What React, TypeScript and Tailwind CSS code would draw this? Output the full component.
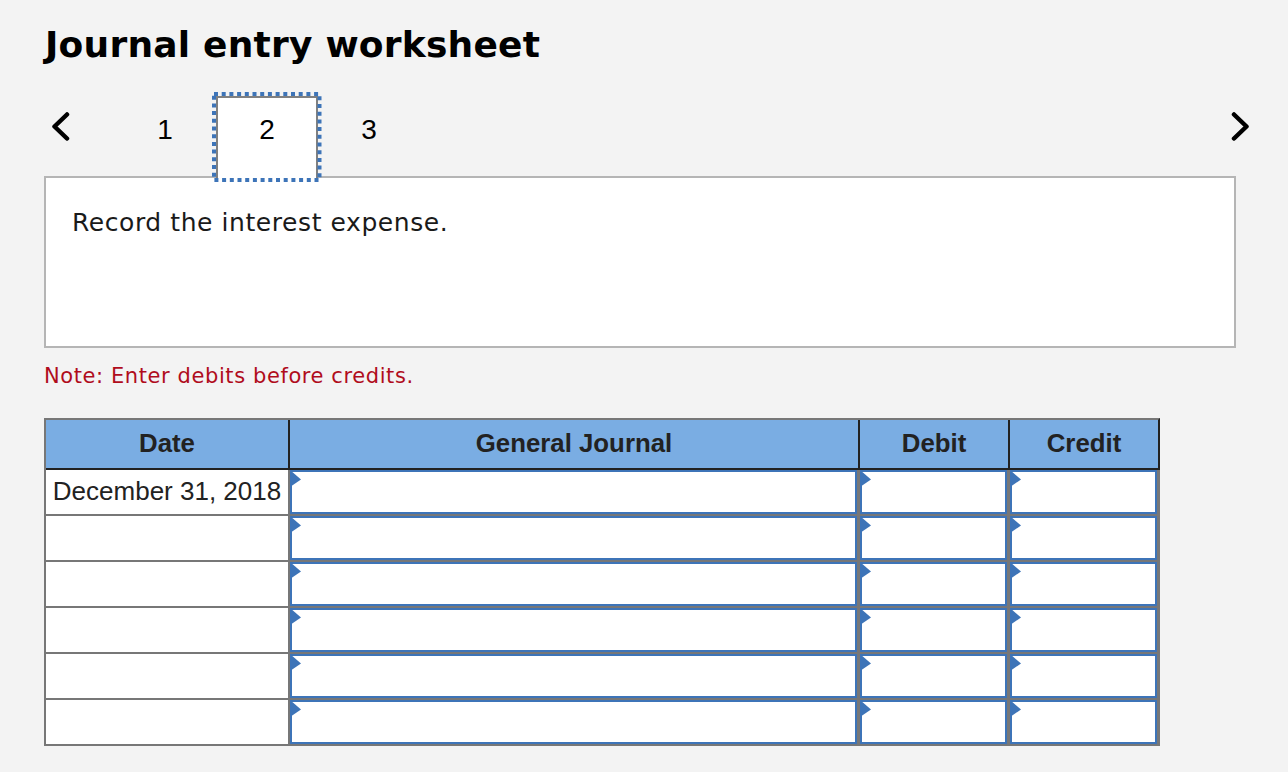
const rows = [0, 1, 2, 3, 4, 5];

function Chevron({ dir }: { dir: "left" | "right" }) {
  return (
    <svg width="18" height="29" viewBox="0 0 18 29" className="text-black">
      <path
        d={dir === "left" ? "M15 2.5 L2.5 14.5 L15 26.5" : "M3 2.5 L15.5 14.5 L3 26.5"}
        fill="none"
        stroke="currentColor"
        strokeWidth="4.5"
        strokeLinecap="round"
        strokeLinejoin="round"
      />
    </svg>
  );
}

function EntryCell() {
  return (
    <div className="relative h-[44px] mr-px border-2 border-[#3d74b8] bg-white">
      <svg width="11" height="17" viewBox="0 0 11 17" className="absolute -left-[2px] -top-[2px]">
        <path d="M0 0 L11 9.5 L0 17 Z" fill="#3d74b8" />
      </svg>
    </div>
  );
}

export default function App() {
  return (
    <div className="min-h-[772px] bg-[#f3f3f3] pt-[22px] px-[44px] font-['Liberation_Sans',sans-serif]">
      <h1 className="h-[46px] pl-px text-[36px] leading-[46px] tracking-[0.22px] font-bold text-black font-['DejaVu_Sans',sans-serif]">
        Journal entry worksheet
      </h1>

      {/* tabs */}
      <div className="mt-[28px] h-[81px] w-[1205px] flex items-start text-[28px] text-black">
        <div className="w-[33px] pt-[16px] pl-[8px]">
          <Chevron dir="left" />
        </div>
        <div className="ml-[37px] w-[102px] h-[81px] flex justify-center pt-[18px] leading-[32px]">1</div>
        <div className="relative z-10 w-[102px] h-[83px] border-2 border-b-0 border-[#808080] bg-white flex justify-center pt-[16px] leading-[32px]">
          2
          <svg width="110" height="90" className="absolute -left-[6px] -top-[6px]">
            <rect x="2" y="2" width="105.5" height="86" fill="none" stroke="#3d74b8" strokeWidth="4" strokeDasharray="4 3.7" />
          </svg>
        </div>
        <div className="w-[102px] h-[81px] flex justify-center pt-[18px] leading-[32px]">3</div>
        <div className="ml-auto pt-[16px]">
          <Chevron dir="right" />
        </div>
      </div>

      {/* prompt */}
      <div className="mt-[-1px] w-[1192px] h-[172px] border-2 border-[#b5b5b5] bg-white pl-[26px] pt-[27px] text-[25px] leading-[36px] tracking-[0.57px] text-[#1a1a1a] font-['DejaVu_Sans',sans-serif]">
        Record the interest expense.
      </div>

      <p className="mt-[14px] h-[28px] text-[21px] leading-[28px] tracking-[0.59px] text-[#b00c1c] font-['DejaVu_Sans',sans-serif]">
        Note: Enter debits before credits.
      </p>

      {/* journal table */}
      <div className="mt-[28px] w-[1116px]">
        <div className="grid grid-cols-[242px_568px_148px_148px] gap-x-[2px] h-[52px] bg-[#222222] border-t-2 border-t-[#777777] border-l-2 border-l-[#777777] border-r-2 border-r-[#222222] pb-[2px] text-[25.8px] font-bold text-[#222222]">
          <div className="bg-[#7aade3] pb-[2px] flex items-center justify-center">Date</div>
          <div className="bg-[#7aade3] pb-[2px] flex items-center justify-center">General Journal</div>
          <div className="bg-[#7aade3] pb-[2px] flex items-center justify-center">Debit</div>
          <div className="bg-[#7aade3] pb-[2px] flex items-center justify-center">Credit</div>
        </div>
        <div className="grid grid-cols-[242px_568px_148px_148px] gap-[2px] bg-[#777777] border-2 border-t-0 border-[#777777]">
          {rows.map((r) => (
            <div key={r} className="contents">
              <div className="h-[44px] pb-[2px] bg-white flex items-center justify-center text-[26px] text-[#222222]">
                {r === 0 ? "December 31, 2018" : ""}
              </div>
              <EntryCell />
              <EntryCell />
              <EntryCell />
            </div>
          ))}
        </div>
      </div>
    </div>
  );
}
